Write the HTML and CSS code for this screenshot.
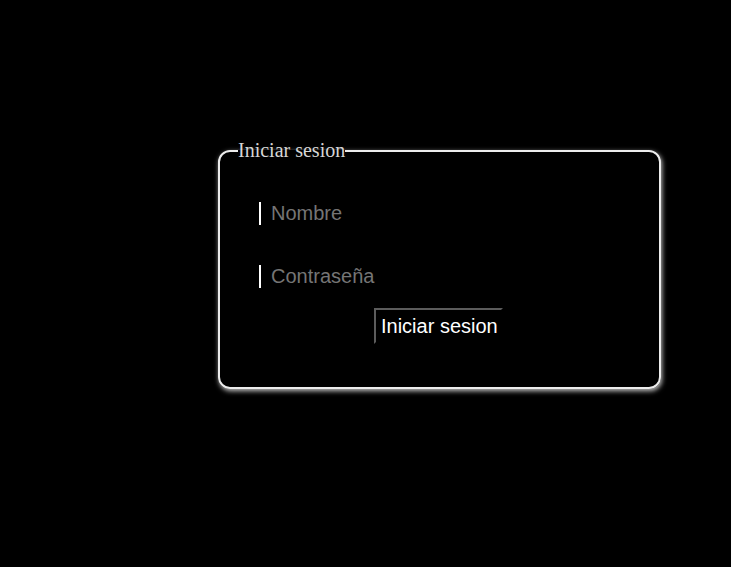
FILE: index.html
```html
<!DOCTYPE html>
<html lang="es">
<head>
<meta charset="utf-8">
<title>Iniciar sesion</title>
<link rel="stylesheet" href="styles.css">
</head>
<body>
<main class="page">
  <form class="login">
    <fieldset class="box">
      <legend class="box-title">Iniciar sesion</legend>
      <input class="field field-first" type="text" placeholder="Nombre">
      <input class="field field-second" type="password" placeholder="Contraseña">
      <div class="actions">
        <button class="submit" type="button">Iniciar sesion</button>
      </div>
    </fieldset>
  </form>
</main>
</body>
</html>
```

FILE: styles.css
```css
html, body {
  margin: 0;
  padding: 0;
  background: #000;
  height: 100%;
}

.page {
  padding: 139px 0 0 218px;
}

.login {
  margin: 0;
  width: 443px;
}

.box {
  margin: 0;
  padding: 0 0 43px 0;
  border: 2px solid #ececec;
  border-radius: 12px;
  box-shadow: 1px 2px 5px #c4c4c4;
  display: flex;
  flex-direction: column;
  min-width: 0;
}

.box-title {
  margin-left: 18px;
  padding: 0;
  font-family: "Liberation Serif", "Times New Roman", serif;
  font-size: 20px;
  line-height: 23px;
  color: #d6d6d6;
}

.field {
  align-self: flex-start;
  margin-left: 39px;
  width: 300px;
  padding: 0 10px;
  background: #000;
  color: #fff;
  border: none;
  border-left: 2px solid #fff;
  font-family: "Liberation Sans", Arial, sans-serif;
  font-size: 20px;
  line-height: 23px;
  outline: none;
}

.field::placeholder {
  color: #757575;
}

.field-first {
  margin-top: 40px;
}

.field-second {
  margin-top: 40px;
}

.actions {
  display: flex;
  justify-content: center;
  margin-top: 20px;
  padding-right: 2px;
}

.submit {
  width: 129px;
  height: 36px;
  padding: 0 5px;
  text-align: left;
  background: #000;
  color: #fff;
  border-style: solid;
  border-width: 2px;
  border-color: #5c5c5c #000 #000 #5c5c5c;
  font-family: "Liberation Sans", Arial, sans-serif;
  font-size: 20px;
  white-space: nowrap;
}
```
